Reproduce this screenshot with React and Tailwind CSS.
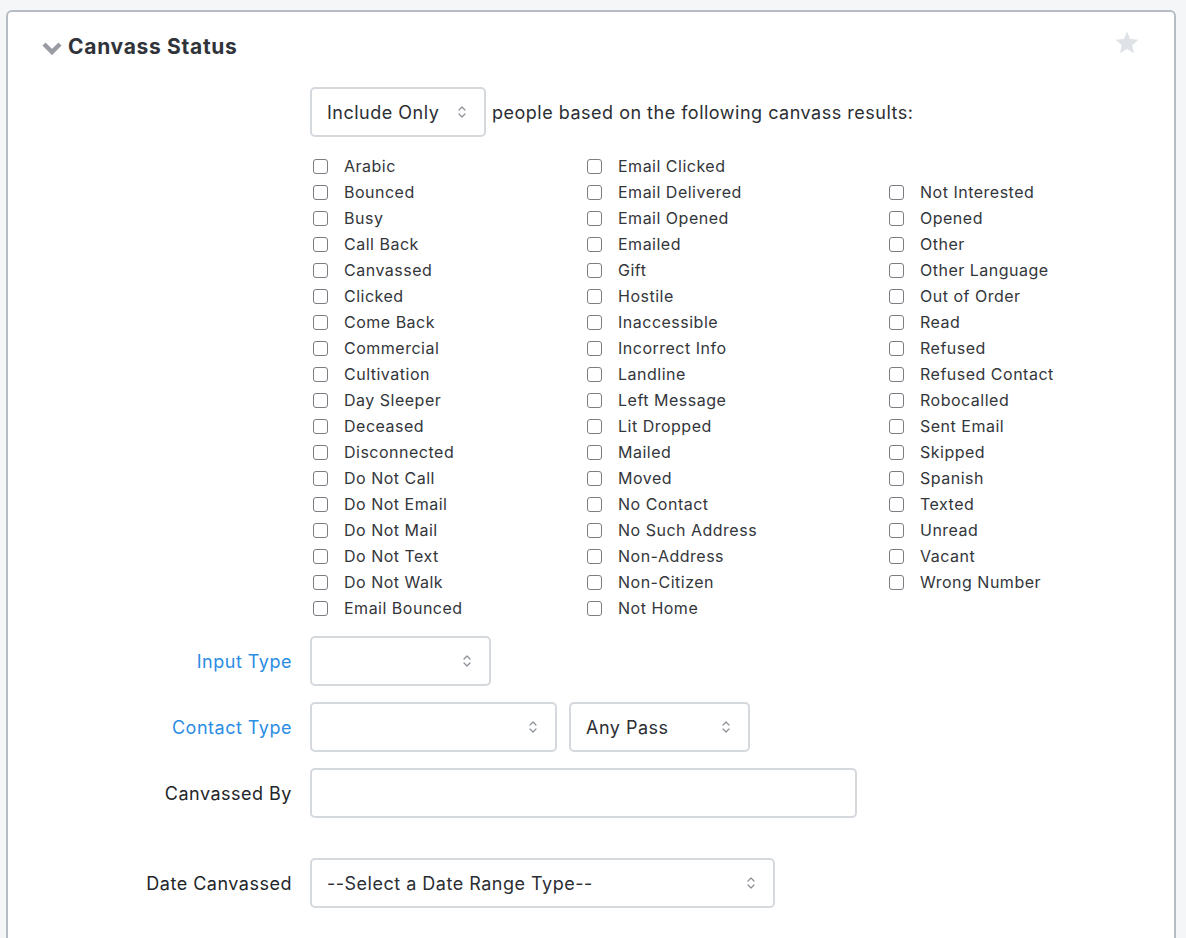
import React from "react";

const col1 = ["Arabic","Bounced","Busy","Call Back","Canvassed","Clicked","Come Back","Commercial","Cultivation","Day Sleeper","Deceased","Disconnected","Do Not Call","Do Not Email","Do Not Mail","Do Not Text","Do Not Walk","Email Bounced"];
const col2 = ["Email Clicked","Email Delivered","Email Opened","Emailed","Gift","Hostile","Inaccessible","Incorrect Info","Landline","Left Message","Lit Dropped","Mailed","Moved","No Contact","No Such Address","Non-Address","Non-Citizen","Not Home"];
const col3 = ["Not Interested","Opened","Other","Other Language","Out of Order","Read","Refused","Refused Contact","Robocalled","Sent Email","Skipped","Spanish","Texted","Unread","Vacant","Wrong Number"];

const font = { fontFamily: "Inter, 'Liberation Sans', sans-serif" };

function UpDown() {
  return (
    <svg width="10" height="16" viewBox="0 0 10 16" fill="none" stroke="#8a8f96" strokeWidth="1.2" strokeLinecap="round" strokeLinejoin="round">
      <path d="M2 6 L5 3 L8 6" />
      <path d="M2 10 L5 13 L8 10" />
    </svg>
  );
}

function Select({ w, text }) {
  return (
    <div className={`h-[50px] ${w} border-2 border-[#d5d8dd] rounded-[5px] bg-white flex items-center justify-between pl-[15px] pr-[17px]`}>
      <span className="text-[18px] text-[#2b2e33] tracking-[0.5px]">{text}</span>
      <UpDown />
    </div>
  );
}

function Check({ label }) {
  return (
    <div className="h-[26px] flex items-center">
      <span className="w-[15px] h-[15px] border border-[#7a7d82] rounded-[3px] bg-white ml-[2px] mr-[16px] shrink-0" />
      <span className="text-[16px] text-[#33363b] tracking-[0.5px] whitespace-nowrap">{label}</span>
    </div>
  );
}

function Row({ label, blue, children, className = "" }) {
  return (
    <div className={`flex items-center ${className}`}>
      <div className={`w-[284px] text-right text-[18px] tracking-[0.5px] ${blue ? "text-[#2b8de3]" : "text-[#222529]"}`}>{label}</div>
      <div className="ml-[18px] flex items-center gap-[12px]">{children}</div>
    </div>
  );
}

export default function App() {
  return (
    <div style={font} className="min-h-[938px] w-[1186px] bg-[#f5f6f8] pt-[10px] pl-[6px] pr-[10px] overflow-hidden">
      <div className="bg-white border-2 border-b-0 border-[#b6bcc4] rounded-t-[6px] min-h-[940px] relative">
        <svg className="absolute right-[34px] top-[18px]" width="26" height="25" viewBox="0 0 24 24" fill="#dfe2e6">
          <path d="M12 1.5l3.1 7.2 7.8.7-5.9 5.2 1.8 7.7L12 18.3l-6.8 4 1.8-7.7-5.9-5.2 7.8-.7z" />
        </svg>
        <div className="flex items-center pt-[11px] pl-[34px] h-[48px] box-content">
          <svg width="20" height="14" viewBox="0 0 20 14" className="mr-[6px] mt-[1px]">
            <path d="M2 3 L10 11 L18 3" stroke="#999da3" strokeWidth="4.5" fill="none" strokeLinejoin="miter" strokeLinecap="butt" />
          </svg>
          <span className="text-[21px] font-bold text-[#30343a] tracking-[0.7px]">Canvass Status</span>
        </div>

        <div className="pl-[302px] pt-[16px] flex items-center">
          <Select w="w-[176px]" text="Include Only" />
          <span className="ml-[6px] text-[18px] text-[#2b2e33] tracking-[0.5px]">people based on the following canvass results:</span>
        </div>

        <div className="pl-[303px] pt-[16px] flex">
          <div className="w-[274px]">{col1.map((l) => <Check key={l} label={l} />)}</div>
          <div className="w-[302px]">{col2.map((l) => <Check key={l} label={l} />)}</div>
          <div className="pt-[26px]">{col3.map((l) => <Check key={l} label={l} />)}</div>
        </div>

        <div className="pt-[15px] flex flex-col">
          <Row label="Input Type" blue>
            <Select w="w-[181px]" text="" />
          </Row>
          <Row label="Contact Type" blue className="mt-[16px]">
            <Select w="w-[247px]" text="" />
            <Select w="w-[181px]" text="Any Pass" />
          </Row>
          <Row label="Canvassed By" className="mt-[16px]">
            <div className="h-[50px] w-[547px] border-2 border-[#d5d8dd] rounded-[5px] bg-white" />
          </Row>
          <Row label="Date Canvassed" className="mt-[40px]">
            <Select w="w-[465px]" text="--Select a Date Range Type--" />
          </Row>
        </div>
      </div>
    </div>
  );
}
